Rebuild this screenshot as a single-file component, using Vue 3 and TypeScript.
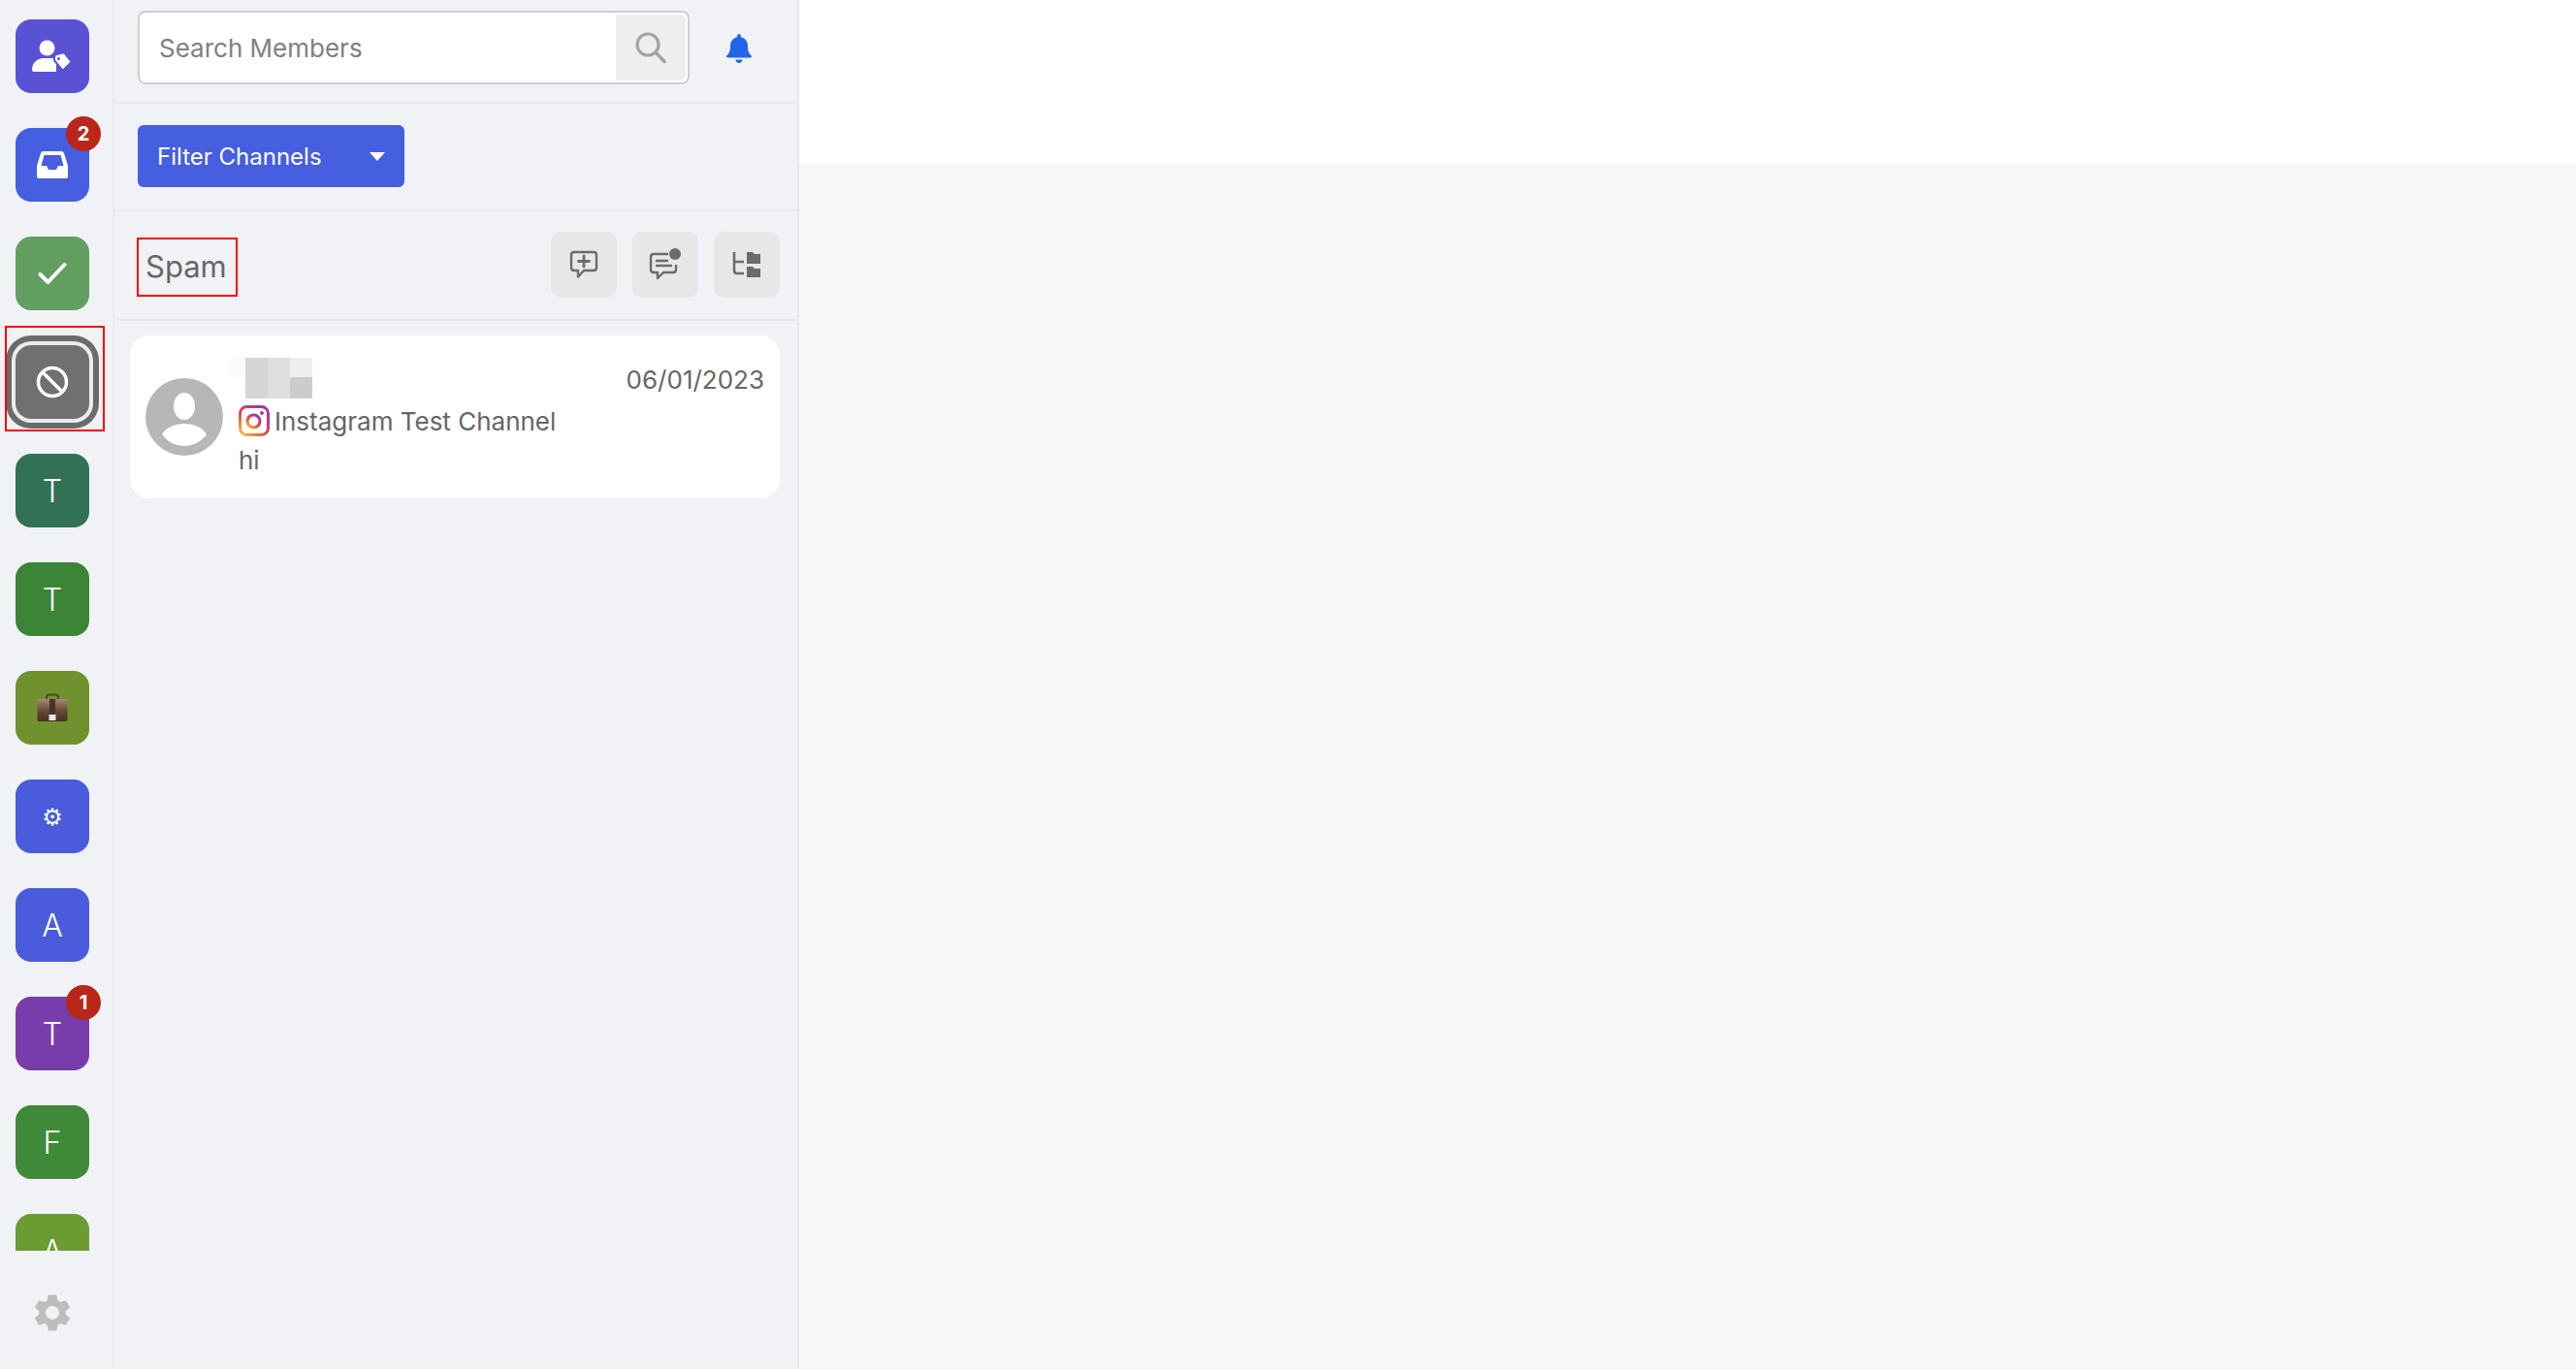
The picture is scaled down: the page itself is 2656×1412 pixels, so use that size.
<script setup lang="ts">
interface RailItem {
  id: number
  color: string
  kind: 'tag' | 'inbox' | 'check' | 'ban' | 'letter' | 'case' | 'cog'
  label?: string
  badge?: number
  selected?: boolean
}

const items: RailItem[] = [
  { id: 1, color: '#5a52d5', kind: 'tag' },
  { id: 2, color: '#465ee0', kind: 'inbox', badge: 2 },
  { id: 3, color: '#629e60', kind: 'check' },
  { id: 4, color: '#707070', kind: 'ban', selected: true },
  { id: 5, color: '#327155', kind: 'letter', label: 'T' },
  { id: 6, color: '#3c8436', kind: 'letter', label: 'T' },
  { id: 7, color: '#6f922e', kind: 'case' },
  { id: 8, color: '#4a5cdb', kind: 'cog' },
  { id: 9, color: '#4a5cdb', kind: 'letter', label: 'A' },
  { id: 10, color: '#783dab', kind: 'letter', label: 'T', badge: 1 },
  { id: 11, color: '#3f8a38', kind: 'letter', label: 'F' },
  { id: 12, color: '#6c9a33', kind: 'letter', label: 'A' }
]

const blur = ['#fafafa', '#d6d6d6', '#dfdfdf', '#eeeeee', '#ffffff', '#d6d6d6', '#dedede', '#cccccc']
const gear =
  'M19.14 12.94c.04-.3.06-.61.06-.94 0-.32-.02-.64-.07-.94l2.03-1.58a.49.49 0 0 0 .12-.61l-1.92-3.32a.488.488 0 0 0-.59-.22l-2.39.96c-.5-.38-1.03-.7-1.62-.94l-.36-2.54a.484.484 0 0 0-.48-.41h-3.84c-.24 0-.43.17-.47.41l-.36 2.54c-.59.24-1.13.57-1.62.94l-2.39-.96c-.22-.08-.47 0-.59.22L2.74 8.87c-.12.21-.08.47.12.61l2.03 1.58c-.05.3-.09.63-.09.94s.02.64.07.94l-2.03 1.58a.49.49 0 0 0-.12.61l1.92 3.32c.12.22.37.29.59.22l2.39-.96c.5.38 1.03.7 1.62.94l.36 2.54c.05.24.24.41.48.41h3.84c.24 0 .44-.17.47-.41l.36-2.54c.59-.24 1.13-.56 1.62-.94l2.39.96c.22.08.47 0 .59-.22l1.92-3.32c.12-.22.07-.47-.12-.61l-2.01-1.58zM12 15.6c-1.98 0-3.6-1.62-3.6-3.6s1.62-3.6 3.6-3.6 3.6 1.62 3.6 3.6-1.62 3.6-3.6 3.6z'
</script>

<template>
  <div class="page">
    <nav class="rail">
      <div class="rail-list">
        <div
          v-for="item in items"
          :key="item.id"
          class="tile"
          :class="{ selected: item.selected }"
          :style="{ background: item.color }"
        >
          <svg v-if="item.kind === 'tag'" class="ico" width="42" height="34" viewBox="0 0 42 34">
            <circle cx="15.500" cy="8.500" r="8" fill="#fff" />
            <path d="M0 31c0-7 5-12 12-12h9c2 0 3 .5 4 1v13H2c-1 0-2-.5-2-2z" fill="#fff" />
            <path
              d="M23.500 15.500l8-2c1-.2 1.700 0 2.300.7l6 7.300c.7.9.6 1.800-.2 2.500l-6.500 6.500c-.8.7-1.800.7-2.500-.2l-7-8.300c-.6-.7-.8-1.300-.7-2.200l.6-4.300z"
              fill="#fff"
              :stroke="item.color"
              stroke-width="2"
            />
            <circle cx="27.500" cy="19.500" r="1.500" :fill="item.color" />
          </svg>
          <svg v-else-if="item.kind === 'inbox'" class="ico" width="32" height="28" viewBox="0 0 32 28">
            <path
              fill="#fff"
              fill-rule="evenodd"
              d="M7 0h18c1.500 0 2.500.8 3 2l4 13v11c0 1.200-.8 2-2 2H2c-1.200 0-2-.8-2-2V15L4 2C4.500.8 5.500 0 7 0zm.5 4L4.500 15H10l2 4h8l2-4h5.500l-3-11z"
            />
          </svg>
          <svg v-else-if="item.kind === 'check'" class="ico" width="30" height="24" viewBox="0 0 30 24">
            <path d="M2.500 13l8 8L27.500 3" fill="none" stroke="#fff" stroke-width="4" stroke-linecap="round" stroke-linejoin="round" />
          </svg>
          <svg v-else-if="item.kind === 'ban'" class="ico" width="34" height="34" viewBox="0 0 34 34">
            <circle cx="17" cy="17" r="14.500" fill="none" stroke="#fff" stroke-width="3.500" />
            <path d="M7 7l20 20" stroke="#fff" stroke-width="3.500" />
          </svg>
          <svg v-else-if="item.kind === 'case'" class="ico" width="32" height="30" viewBox="0 0 32 30">
            <defs>
              <linearGradient id="caseGrad" x1="0" y1="0" x2="0" y2="1">
                <stop offset="0" stop-color="#a98a78" />
                <stop offset="0.5" stop-color="#6a4a38" />
                <stop offset="1" stop-color="#46301f" />
              </linearGradient>
            </defs>
            <path d="M10 7V4c0-1.500 1-2.500 2.500-2.500h7C21 1.500 22 2.500 22 4v3" fill="none" stroke="#5a4434" stroke-width="2" />
            <rect x="0.500" y="6" width="31" height="23" rx="1.500" fill="url(#caseGrad)" />
            <rect x="13" y="6" width="6" height="16" fill="#4c3324" />
            <rect x="12.500" y="22" width="7" height="6" fill="#e8e8e8" />
          </svg>
          <span v-else-if="item.kind === 'cog'" class="cog">⚙</span>
          <span v-else class="letter">{{ item.label }}</span>
          <span v-if="item.badge" class="badge">{{ item.badge }}</span>
        </div>
      </div>
      <div class="rail-foot">
        <svg width="46" height="46" viewBox="0 0 24 24"><path :d="gear" fill="#bdbdbd" /></svg>
      </div>
    </nav>

    <section class="panel">
      <header class="search-row">
        <div class="search">
          <span class="placeholder">Search Members</span>
          <span class="search-btn">
            <svg width="34" height="34" viewBox="0 0 34 34">
              <circle cx="14" cy="14" r="11" fill="none" stroke="#a3a3a3" stroke-width="3.200" />
              <path d="M22 22l9 9.500" stroke="#a3a3a3" stroke-width="3.600" stroke-linecap="round" />
            </svg>
          </span>
        </div>
        <svg class="bell" width="26" height="30" viewBox="0 0 26 30">
          <path
            fill="#2563eb"
            d="M13 0c1 0 1.800.8 1.800 1.900v1.300C19.500 4.200 22 8 22 12.500c0 5 1.300 7.500 3.300 9.500.6.600.8 1.200.5 1.800-.2.500-.8.700-1.300.7H1.500c-.5 0-1.100-.2-1.300-.7-.3-.6-.1-1.200.5-1.800C2.700 20 4 17.500 4 12.500 4 8 6.500 4.200 11.200 3.200V1.900C11.200.8 12 0 13 0zM9.500 26.500h7C16.500 28.500 15 30 13 30s-3.500-1.500-3.500-3.500z"
          />
        </svg>
      </header>

      <div class="filter-row">
        <button class="filter">
          <span>Filter Channels</span>
          <i class="caret"></i>
        </button>
      </div>

      <div class="title-row">
        <h1 class="title">Spam</h1>
        <div class="tools">
          <span class="tool">
            <svg width="30" height="30" viewBox="0 0 30 30" fill="none" stroke="#6b6b6b" stroke-width="2.400" stroke-linejoin="round">
              <path d="M5 2h20c1.700 0 3 1.300 3 3v13c0 1.700-1.300 3-3 3H15l-6 6.500V21H5c-1.700 0-3-1.300-3-3V5c0-1.700 1.300-3 3-3z" />
              <path d="M15 6v11M9.500 11.500h11" stroke-linecap="round" stroke-width="2.800" />
            </svg>
          </span>
          <span class="tool">
            <svg width="34" height="34" viewBox="0 0 34 34" fill="none" stroke="#6b6b6b" stroke-width="2.400" stroke-linejoin="round">
              <path d="M20 6H5c-1.700 0-3 1.300-3 3v13c0 1.700 1.300 3 3 3h4v6l6-6h10c1.700 0 3-1.300 3-3v-5" />
              <path d="M8 13h11M8 18h15" stroke-linecap="round" />
              <circle cx="27" cy="6" r="6" fill="#6b6b6b" stroke="none" />
            </svg>
          </span>
          <span class="tool">
            <svg width="30" height="28" viewBox="0 0 30 28">
              <path d="M2 1v19c0 2 1 3 3 3h7M2 11h10" fill="none" stroke="#6b6b6b" stroke-width="2.600" />
              <path d="M15 1h6l2 2h6v10H15zM15 16h6l2 2h6v9H15z" fill="#6b6b6b" />
            </svg>
          </span>
        </div>
      </div>

      <article class="card">
        <svg class="avatar" width="80" height="80" viewBox="0 0 80 80">
          <circle cx="40" cy="40" r="40" fill="#b7b7b7" />
          <ellipse cx="40" cy="29" rx="11" ry="14" fill="#fff" />
          <path d="M17 58c4-7 13-11 23-11s19 4 23 11c-5 7-13 12-23 12s-18-5-23-12z" fill="#fff" />
        </svg>
        <div class="card-body">
          <div class="card-top">
            <div class="blurred">
              <i v-for="(shade, i) in blur" :key="i" :style="{ background: shade }"></i>
            </div>
            <span class="date">06/01/2023</span>
          </div>
          <div class="channel">
            <svg width="32" height="32" viewBox="0 0 32 32">
              <defs>
                <linearGradient id="igGrad" x1="0.100" y1="1" x2="0.900" y2="0">
                  <stop offset="0" stop-color="#f5b942" />
                  <stop offset="0.400" stop-color="#e0503a" />
                  <stop offset="0.750" stop-color="#c13584" />
                  <stop offset="1" stop-color="#8a3ab9" />
                </linearGradient>
              </defs>
              <rect x="1.500" y="1.500" width="29" height="29" rx="7" fill="none" stroke="url(#igGrad)" stroke-width="3" />
              <circle cx="15.500" cy="16.500" r="6.500" fill="none" stroke="url(#igGrad)" stroke-width="3" />
              <circle cx="24" cy="8" r="2" fill="#c13584" />
            </svg>
            <span>Instagram Test Channel</span>
          </div>
          <p class="message">hi</p>
        </div>
      </article>
    </section>

    <main class="main">
      <div class="main-top"></div>
    </main>
  </div>
</template>

<style scoped>
.page {
  display: flex;
  width: 2656px;
  height: 1412px;
  overflow: hidden;
  font-family: Inter, "Liberation Sans", sans-serif;
  color: #666;
}
.rail {
  width: 118px;
  flex: none;
  display: flex;
  flex-direction: column;
  background: #f0f2f6;
  border-right: 2px solid #e8e9ed;
  box-sizing: border-box;
}
.rail-list {
  height: 1290px;
  flex: none;
  overflow: hidden;
  display: flex;
  flex-direction: column;
  gap: 36px;
  padding: 20px 0 0 16px;
  box-sizing: border-box;
}
.tile {
  position: relative;
  flex: none;
  width: 76px;
  height: 76px;
  border-radius: 16px;
  display: flex;
  align-items: center;
  justify-content: center;
  color: #fff;
}
.tile.selected {
  box-shadow: 0 0 0 4px #ececec, 0 0 0 10px #6b6b6b;
}
.tile.selected::after {
  content: "";
  position: absolute;
  left: -11px;
  right: -16px;
  top: -20px;
  bottom: -13px;
  border: 2px solid #f00;
}
.letter {
  font-size: 32px;
  font-weight: 300;
  line-height: 1;
  padding-top: 2px;
}
.cog {
  font-family: "DejaVu Sans", sans-serif;
  font-size: 24px;
  line-height: 1;
  padding-top: 2px;
}
.badge {
  position: absolute;
  left: 52px;
  top: -12px;
  width: 36px;
  height: 36px;
  border-radius: 50%;
  background: #b9261a;
  color: #fff;
  font-size: 20px;
  font-weight: 700;
  display: flex;
  align-items: center;
  justify-content: center;
}
.rail-foot {
  flex: 1;
  display: flex;
  justify-content: center;
  align-items: center;
  padding: 6px 8px 0 0;
}
.panel {
  width: 706px;
  flex: none;
  background: #f0f2f6;
  border-right: 2px solid #e6e7eb;
  box-sizing: border-box;
}
.search-row {
  height: 107px;
  box-sizing: border-box;
  border-bottom: 2px solid #e8e9ec;
  display: flex;
  align-items: flex-start;
  padding: 11px 0 0 24px;
}
.search {
  width: 569px;
  height: 76px;
  box-sizing: border-box;
  border: 2px solid #cfcfcf;
  border-radius: 8px;
  background: #fff;
  display: flex;
  align-items: stretch;
  padding: 2px;
}
.placeholder {
  flex: 1;
  font-size: 26px;
  line-height: 70px;
  padding-left: 18px;
  color: #808080;
}
.search-btn {
  width: 72px;
  background: #eee;
  border-radius: 0 6px 6px 0;
  display: flex;
  align-items: center;
  justify-content: center;
}
.bell {
  margin: 24px 0 0 38px;
}
.filter-row {
  height: 111px;
  box-sizing: border-box;
  border-bottom: 2px solid #e8e9ec;
  padding: 22px 0 0 24px;
}
.filter {
  width: 275px;
  height: 64px;
  border: 0;
  border-radius: 6px;
  background: #465ee0;
  color: #fff;
  font-family: inherit;
  font-size: 24px;
  display: flex;
  align-items: center;
  justify-content: space-between;
  padding: 0 20px;
}
.caret {
  width: 0;
  height: 0;
  border-left: 8px solid transparent;
  border-right: 8px solid transparent;
  border-top: 9px solid #fff;
}
.title-row {
  height: 113px;
  box-sizing: border-box;
  border-bottom: 2px solid #e8e9ec;
  display: flex;
  align-items: flex-start;
  justify-content: space-between;
  padding: 21px 18px 0 23px;
}
.title {
  margin: 6px 0 0;
  width: 104px;
  height: 61px;
  box-sizing: border-box;
  border: 2px solid #f00;
  font-size: 31px;
  font-weight: 400;
  line-height: 55px;
  padding-left: 7px;
  color: #666;
}
.tools {
  display: flex;
  gap: 16px;
}
.tool {
  width: 68px;
  height: 68px;
  border-radius: 10px;
  background: #e7e7e7;
  display: flex;
  align-items: center;
  justify-content: center;
}
.card {
  margin: 15px 18px 0 16px;
  height: 168px;
  box-sizing: border-box;
  background: #fff;
  border-radius: 20px;
  display: flex;
  align-items: center;
  gap: 16px;
  padding: 0 16px;
}
.avatar {
  flex: none;
}
.card-body {
  flex: 1;
  min-width: 0;
}
.card-top {
  display: flex;
  justify-content: space-between;
  height: 42px;
  margin-bottom: 7px;
}
.blurred {
  margin-left: -8px;
  width: 84px;
  height: 42px;
  display: grid;
  grid-template-columns: 15px 23px 23px 23px;
  grid-template-rows: 20px 22px;
}
.date {
  font-size: 26px;
  line-height: 46px;
  color: #666;
}
.channel {
  display: flex;
  align-items: center;
  gap: 5px;
  height: 32px;
  font-size: 26px;
  color: #666;
}
.message {
  margin: 9px 0 0;
  font-size: 26px;
  line-height: 32px;
  color: #666;
}
.main {
  flex: 1;
  background: #f7f7f8;
}
.main-top {
  height: 169px;
  background: #fff;
}
</style>

<style>
html,
body {
  margin: 0;
  background: #f7f7f8;
}
</style>
